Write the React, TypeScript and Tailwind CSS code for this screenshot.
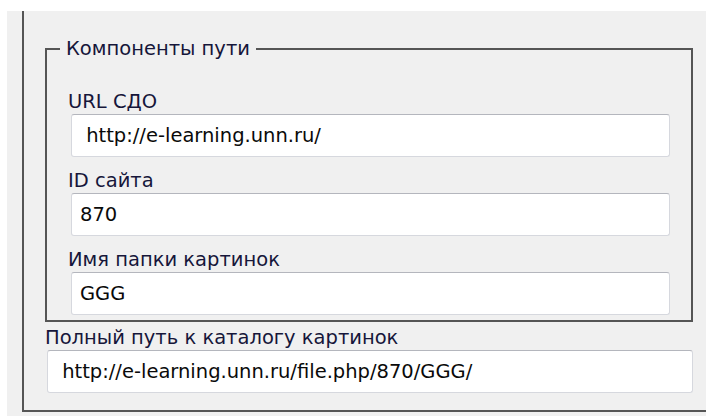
import React from 'react';

interface FieldProps {
  label: string;
  value: string;
}

// Single labelled read-only text box
const Field: React.FC<FieldProps> = ({ label, value }) => {
  return (
    <div className="flex flex-col">
      <div className="-ml-[3px] h-[24px] leading-[24px] text-[#16163a]">{label}</div>
      <div className="h-[43px] rounded-[3px] border border-[#d6d8de] border-t-[#b4b6bd] bg-white pl-[8px] leading-[41px] whitespace-pre text-[#0a0a0a]">
        {value}
      </div>
    </div>
  );
};

const App: React.FC = () => {
  const baseUrl = 'http://e-learning.unn.ru/';
  const siteId = '870';
  const folder = 'GGG';
  const fullPath = `${baseUrl}file.php/${siteId}/${folder}/`;

  return (
    <div className="h-[416px] w-[706px] overflow-hidden bg-white pl-[7px] pt-[11px] font-['DejaVu_Sans',sans-serif] text-[19.5px]">
      <div className="h-full bg-[#f0f0f0] pl-[15px]">
        <div className="h-[401px] border-b-2 border-l-2 border-[#555555] pl-[21px] pr-[13px] pt-[26px]">
          <fieldset className="border-2 border-[#555555] px-0 pb-[5px]">
            <legend className="ml-[13px] px-[6px] leading-[24px] text-[#16163a]">Компоненты пути</legend>
            <div className="flex flex-col gap-[12px] pl-[24px] pr-[21px] pt-[29px]">
              <Field label="URL СДО" value={' ' + baseUrl} />
              <Field label="ID сайта" value={siteId} />
              <Field label="Имя папки картинок" value={folder} />
            </div>
          </fieldset>

          <div className="mt-[4px] flex flex-col">
            <div className="h-[24px] leading-[24px] text-[#16163a]">Полный путь к каталогу картинок</div>
            <div className="ml-[2px] h-[43px] rounded-[3px] border border-[#d6d8de] border-t-[#b4b6bd] bg-white pl-[8px] leading-[41px] whitespace-pre text-[#0a0a0a]">
              {' ' + fullPath}
            </div>
          </div>
        </div>
      </div>
    </div>
  );
};

export default App;
